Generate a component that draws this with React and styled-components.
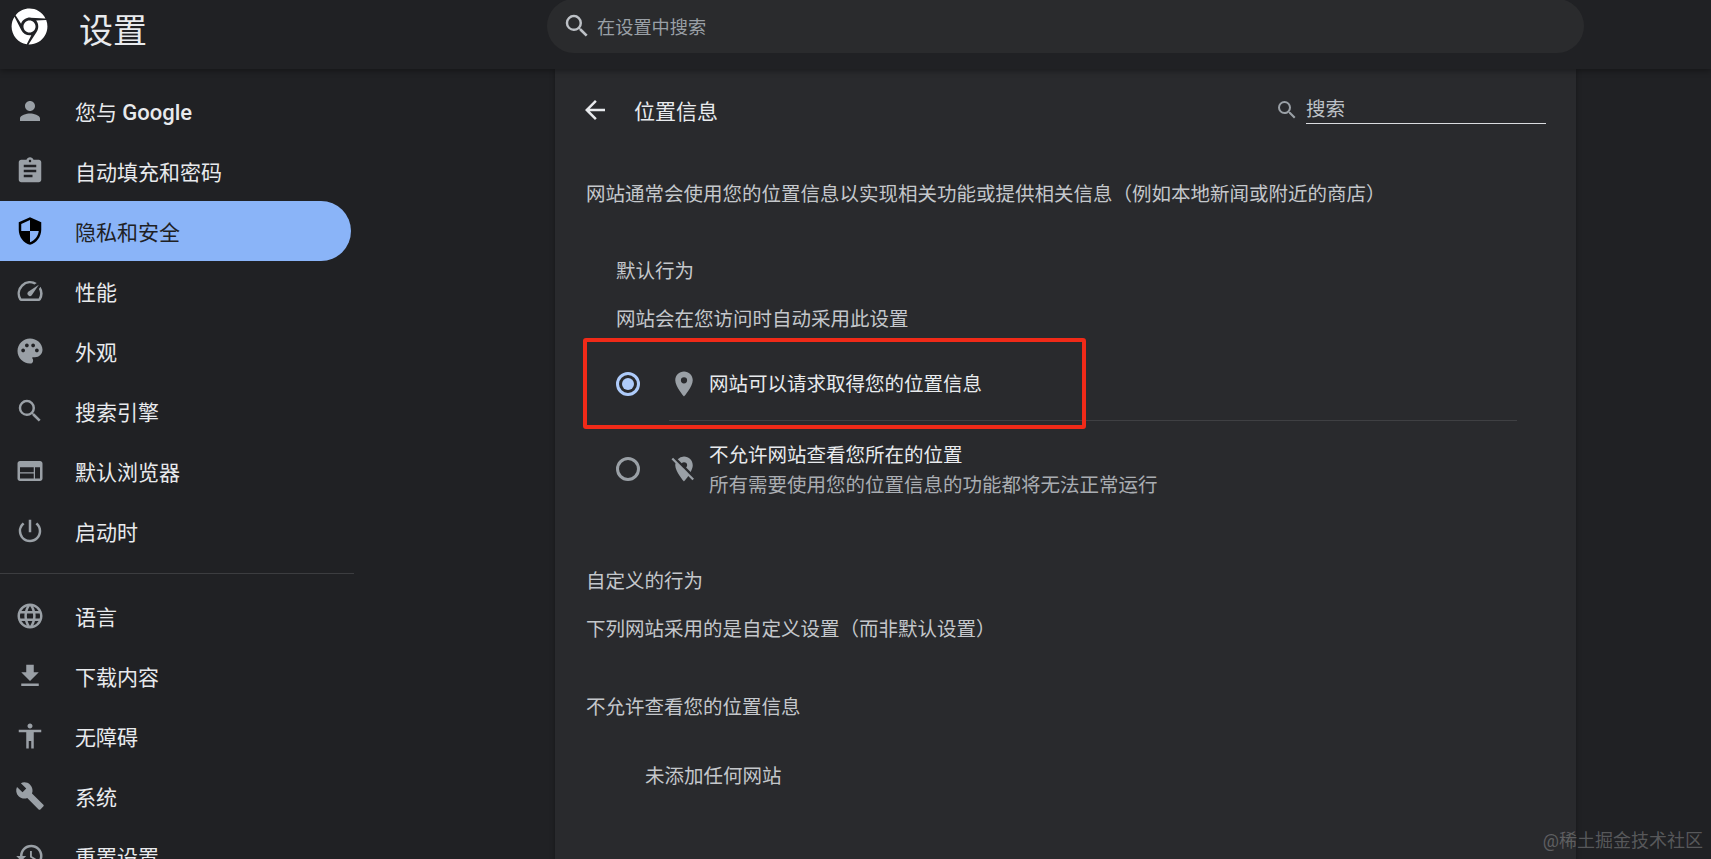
import React from "react";
import styled, { createGlobalStyle } from "styled-components";
import {
  MdPerson,
  MdAssignment,
  MdSecurity,
  MdSpeed,
  MdPalette,
  MdSearch,
  MdWeb,
  MdPowerSettingsNew,
  MdLanguage,
  MdFileDownload,
  MdAccessibility,
  MdBuild,
  MdHistory,
  MdLocationOn,
  MdLocationOff,
  MdArrowBack,
} from "react-icons/md";
import { FaChrome } from "react-icons/fa";

const GlobalStyle = createGlobalStyle`
  html, body {
    margin: 0;
    height: 100%;
    overflow: hidden;
    background: #202124;
  }
  body {
    font-family: Roboto, "Noto Sans CJK SC", sans-serif;
    color: #e8eaed;
  }
`;

const Page = styled.div`
  position: relative;
  width: 1711px;
  height: 859px;
  overflow: hidden;
`;

const Header = styled.header`
  position: relative;
  z-index: 2;
  display: flex;
  height: 69px;
  padding-left: 11px;
  background: #202124;
  box-shadow: 0 2px 6px rgba(0, 0, 0, 0.35);
`;

const Logo = styled.div`
  display: flex;
  width: 37px;
  height: 37px;
  margin-top: 8px;
  color: #fff;
  font-size: 37px;
`;

const AppTitle = styled.h1`
  width: 468px;
  margin: 6px 0 0 31px;
  font-size: 34px;
  font-weight: 400;
  line-height: 50px;
  color: #e8eaed;
`;

const TopSearch = styled.div`
  display: flex;
  align-items: center;
  width: 1037px;
  height: 54px;
  margin-top: -1px;
  padding-left: 15px;
  box-sizing: border-box;
  border-radius: 27px;
  background: #2a2b2d;
  color: #bdc1c6;
`;

const TopSearchText = styled.span`
  margin-left: 5px;
  font-size: 18.2px;
  color: #9aa0a6;
`;

const Body = styled.div`
  display: grid;
  grid-template-columns: 555px 1021px;
  height: 790px;
`;

const Sidebar = styled.nav`
  padding-top: 12px;
`;

const NavRow = styled.div`
  display: flex;
  align-items: center;
  width: ${(p) => (p.$active ? "351px" : "auto")};
  height: 60px;
  padding-left: 15px;
  box-sizing: border-box;
  gap: 30px;
  border-radius: 0 30px 30px 0;
  background: ${(p) => (p.$active ? "#8ab4f8" : "transparent")};
  color: ${(p) => (p.$active ? "#202124" : "#e8eaed")};
  font-size: 21px;
  svg {
    flex: none;
    color: ${(p) => (p.$active ? "#000" : "#9aa0a6")};
  }
`;

const Latin = styled.span`
  font-size: 22px;
  font-weight: 500;
`;

const NavDivider = styled.div`
  width: 354px;
  height: 1px;
  margin: 12px 0 12px;
  background: #3c3d40;
`;

const Card = styled.main`
  background: #292a2d;
  box-shadow: 0 0 5px rgba(0, 0, 0, 0.3);
`;

const TitleBar = styled.div`
  display: flex;
  align-items: center;
  height: 82px;
  padding: 0 30px 0 25px;
`;

const BackIcon = styled(MdArrowBack)`
  color: #e8eaed;
  margin-right: 24px;
`;

const PageTitle = styled.h2`
  margin: 0;
  font-size: 21px;
  font-weight: 400;
  color: #e8eaed;
`;

const SearchField = styled.div`
  display: flex;
  align-items: center;
  gap: 7px;
  margin-left: auto;
  color: #9aa0a6;
`;

const SearchInput = styled.div`
  width: 240px;
  height: 27px;
  box-sizing: border-box;
  border-bottom: 1px solid #dadce0;
  font-size: 19.5px;
  line-height: 26px;
  color: #bdc1c6;
`;

const Line = styled.p`
  margin: ${(p) => p.$top || 0}px 0 0 ${(p) => p.$left || 31}px;
  font-size: 19.5px;
  line-height: 30px;
  color: #c4c7cb;
`;

const RadioRow = styled.div`
  display: flex;
  align-items: center;
  height: ${(p) => p.$height}px;
  margin-top: ${(p) => p.$top || 0}px;
  padding-left: 61px;
  padding-right: 59px;
`;

const Radio = styled.span`
  flex: none;
  display: flex;
  align-items: center;
  justify-content: center;
  width: 24px;
  height: 24px;
  box-sizing: border-box;
  border: 3px solid ${(p) => (p.$checked ? "#aecbfa" : "#9aa0a6")};
  border-radius: 50%;
  &::after {
    content: "";
    display: ${(p) => (p.$checked ? "block" : "none")};
    width: 12px;
    height: 12px;
    border-radius: 50%;
    background: #aecbfa;
  }
`;

const RadioBody = styled.div`
  flex: 1;
  align-self: stretch;
  display: flex;
  align-items: center;
  gap: 10px;
  margin-left: 29px;
  border-bottom: ${(p) => (p.$divider ? "1px solid #3f4043" : "none")};
  color: #9aa0a6;
`;

const OptionText = styled.div`
  padding-top: ${(p) => p.$top || 0}px;
`;

const OptionTitle = styled.div`
  font-size: 19.5px;
  line-height: 30px;
  color: #e8eaed;
`;

const OptionSub = styled.div`
  font-size: 19.5px;
  line-height: 30px;
  color: #a9adb2;
`;

const Highlight = styled.div`
  position: absolute;
  left: 583px;
  top: 338px;
  width: 503px;
  height: 91px;
  box-sizing: border-box;
  border: 4px solid #f02a18;
  border-radius: 3px;
  pointer-events: none;
`;

const Watermark = styled.div`
  position: absolute;
  right: 8px;
  bottom: 7px;
  font-size: 18px;
  line-height: 22px;
  color: rgba(255, 255, 255, 0.26);
`;

const navTop = [
  [MdPerson, "您与 ", "Google"],
  [MdAssignment, "自动填充和密码"],
  [MdSecurity, "隐私和安全", null, true],
  [MdSpeed, "性能"],
  [MdPalette, "外观"],
  [MdSearch, "搜索引擎"],
  [MdWeb, "默认浏览器"],
  [MdPowerSettingsNew, "启动时"],
];

const navBottom = [
  [MdLanguage, "语言"],
  [MdFileDownload, "下载内容"],
  [MdAccessibility, "无障碍"],
  [MdBuild, "系统"],
  [MdHistory, "重置设置"],
];

const NavItem = ({ item }) => {
  const [Icon, label, latin, active] = item;
  return (
    <NavRow $active={active}>
      <Icon size={30} />
      <span>
        {label}
        {latin && <Latin>{latin}</Latin>}
      </span>
    </NavRow>
  );
};

const App = () => {
  return (
    <Page>
      <GlobalStyle />
      <Header>
        <Logo>
          <FaChrome />
        </Logo>
        <AppTitle>设置</AppTitle>
        <TopSearch>
          <MdSearch size={30} />
          <TopSearchText>在设置中搜索</TopSearchText>
        </TopSearch>
      </Header>
      <Body>
        <Sidebar>
          {navTop.map((item) => (
            <NavItem key={item[1]} item={item} />
          ))}
          <NavDivider />
          {navBottom.map((item) => (
            <NavItem key={item[1]} item={item} />
          ))}
        </Sidebar>
        <Card>
          <TitleBar>
            <BackIcon size={30} />
            <PageTitle>位置信息</PageTitle>
            <SearchField>
              <MdSearch size={24} />
              <SearchInput>搜索</SearchInput>
            </SearchField>
          </TitleBar>
          <Line $top={29}>网站通常会使用您的位置信息以实现相关功能或提供相关信息（例如本地新闻或附近的商店）</Line>
          <Line $top={47} $left={61}>默认行为</Line>
          <Line $top={18} $left={61}>网站会在您访问时自动采用此设置</Line>
          <RadioRow $height={74} $top={12}>
            <Radio $checked />
            <RadioBody $divider>
              <MdLocationOn size={30} />
              <OptionText $top={3}>
                <OptionTitle>网站可以请求取得您的位置信息</OptionTitle>
              </OptionText>
            </RadioBody>
          </RadioRow>
          <RadioRow $height={96}>
            <Radio />
            <RadioBody>
              <MdLocationOff size={30} />
              <OptionText $top={3}>
                <OptionTitle>不允许网站查看您所在的位置</OptionTitle>
                <OptionSub>所有需要使用您的位置信息的功能都将无法正常运行</OptionSub>
              </OptionText>
            </RadioBody>
          </RadioRow>
          <Line $top={50}>自定义的行为</Line>
          <Line $top={18}>下列网站采用的是自定义设置（而非默认设置）</Line>
          <Line $top={48}>不允许查看您的位置信息</Line>
          <Line $top={39} $left={90}>未添加任何网站</Line>
        </Card>
      </Body>
      <Highlight />
      <Watermark>@稀土掘金技术社区</Watermark>
    </Page>
  );
};

export default App;
